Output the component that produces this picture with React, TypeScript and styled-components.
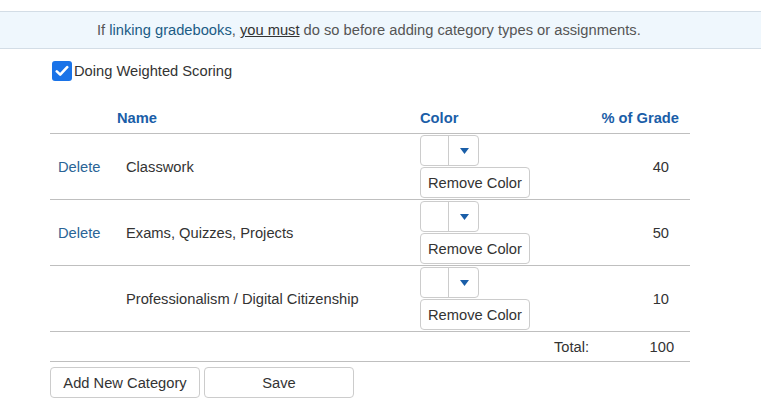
import React from "react";
import styled, { createGlobalStyle } from "styled-components";

const FS = "14.7px";

const Global = createGlobalStyle`
  html, body { margin: 0; padding: 0; background: #fff; }
  body { font-family: "Liberation Sans", Arial, sans-serif; font-size: ${FS}; color: #333; }
  * { box-sizing: border-box; }
`;

const Page = styled.div`
  padding-top: 11px;
`;

const Banner = styled.div`
  height: 38px;
  background: #eff7fd;
  border-top: 1px solid #d3dde6;
  border-bottom: 1px solid #d3dde6;
  display: flex;
  align-items: center;
  padding-left: 97px;
  color: #555;
`;

const BannerLink = styled.span`
  color: #1b5c85;
`;

const Must = styled.span`
  color: #333;
  text-decoration: underline;
`;

const Content = styled.div`
  padding: 0 71px 0 50px;
`;

const CheckRow = styled.label`
  display: flex;
  align-items: center;
  height: 22px;
  margin-top: 11px;
  padding-left: 2px;
  gap: 2px;
  color: #333;
`;

const CheckBox = styled.span`
  width: 20px;
  height: 20px;
  border-radius: 3px;
  background: #1a73e8;
  display: flex;
  align-items: center;
  justify-content: center;
`;

const Table = styled.div`
  margin-top: 21px;
  width: 640px;
`;

const HeaderRow = styled.div`
  display: grid;
  grid-template-columns: 67px 303px 1fr;
  align-items: center;
  height: 31px;
  padding-bottom: 1px;
  border-bottom: 1px solid #bfbfbf;
  font-weight: bold;
  color: #1a5ea8;
`;

const RightCell = styled.div<{ $pr: number }>`
  text-align: right;
  padding-right: ${(p) => p.$pr}px;
`;

const Row = styled.div`
  display: grid;
  grid-template-columns: 67px 303px 1fr;
  align-items: center;
  height: 66px;
  border-bottom: 1px solid #bfbfbf;
`;

const DeleteLink = styled.a`
  color: #2a6496;
  padding-left: 8px;
  cursor: pointer;
`;

const NameCell = styled.div`
  padding-left: 9px;
  color: #333;
`;

const ColorCell = styled.div`
  display: grid;
  grid-template-columns: auto 1fr;
  align-items: center;
`;

const Pickers = styled.div`
  display: flex;
  flex-direction: column;
  gap: 1px;
`;

const Picker = styled.div`
  width: 59px;
  height: 31px;
  border: 1px solid #ccc;
  border-radius: 4px;
  display: grid;
  grid-template-columns: 28px 1fr;
  background: #fff;
`;

const Swatch = styled.div`
  border-right: 1px solid #ccc;
`;

const Arrow = styled.div`
  display: flex;
  align-items: center;
  justify-content: center;
  padding-left: 1px;
`;

const Button = styled.button<{ $w?: number }>`
  height: 31px;
  ${(p) => (p.$w ? `width: ${p.$w}px;` : "")}
  padding: 0 7px;
  background: #fff;
  border: 1px solid #ccc;
  border-radius: 4px;
  font-family: "Liberation Sans", Arial, sans-serif;
  font-size: ${FS};
  color: #333;
  text-align: center;
`;

const TotalRow = styled.div`
  display: grid;
  grid-template-columns: 1fr 86px;
  align-items: center;
  height: 30px;
  border-bottom: 1px solid #bfbfbf;
  padding-right: 16px;
`;

const TotalLabel = styled.div`
  justify-self: start;
  margin-left: 504px;
`;

const Actions = styled.div`
  display: flex;
  gap: 4px;
  margin-top: 5px;
`;

const cats = [
  { name: "Classwork", pct: 40, del: true },
  { name: "Exams, Quizzes, Projects", pct: 50, del: true },
  { name: "Professionalism / Digital Citizenship", pct: 10, del: false },
];

export default function App() {
  return (
    <>
      <Global />
      <Page>
        <Banner>
          <span>
            If <BannerLink>linking gradebooks</BannerLink>, <Must>you must</Must> do so before adding
            category types or assignments.
          </span>
        </Banner>
        <Content>
          <CheckRow>
            <CheckBox>
              <svg width="14" height="12" viewBox="0 0 14 12">
                <path d="M1.8 6.4 L5.2 9.6 L12.2 2.2" fill="none" stroke="#fff" strokeWidth="2.6" strokeLinecap="round" strokeLinejoin="round" />
              </svg>
            </CheckBox>
            Doing Weighted Scoring
          </CheckRow>
          <Table>
            <HeaderRow>
              <div />
              <div>Name</div>
              <ColorCell>
                <div>Color</div>
                <RightCell $pr={11}>% of Grade</RightCell>
              </ColorCell>
            </HeaderRow>
            {cats.map((c) => (
              <Row key={c.name}>
                <div>{c.del && <DeleteLink>Delete</DeleteLink>}</div>
                <NameCell>{c.name}</NameCell>
                <ColorCell>
                  <Pickers>
                    <Picker>
                      <Swatch />
                      <Arrow>
                        <svg width="9" height="6" viewBox="0 0 9 6">
                          <path d="M0 0 H9 L4.5 6 Z" fill="#1a5ea8" />
                        </svg>
                      </Arrow>
                    </Picker>
                    <Button>Remove Color</Button>
                  </Pickers>
                  <RightCell $pr={21}>{c.pct}</RightCell>
                </ColorCell>
              </Row>
            ))}
            <TotalRow>
              <TotalLabel>Total:</TotalLabel>
              <RightCell $pr={1}>100</RightCell>
            </TotalRow>
          </Table>
          <Actions>
            <Button $w={150}>Add New Category</Button>
            <Button $w={150}>Save</Button>
          </Actions>
        </Content>
      </Page>
    </>
  );
}
